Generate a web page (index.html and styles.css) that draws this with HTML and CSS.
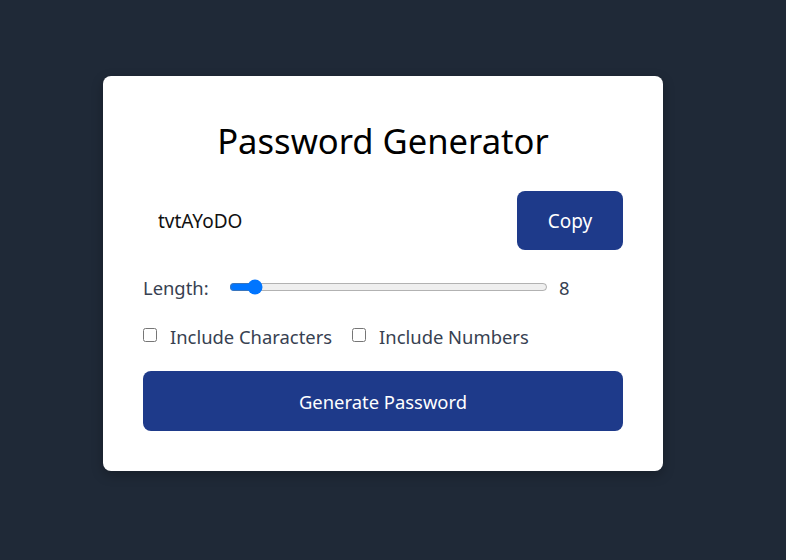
FILE: index.html
```html
<!DOCTYPE html>
<html>
<head>
<meta charset="utf-8">
<link rel="stylesheet" href="styles.css">
</head>
<body>
<div class="page">
  <div class="card">
    <h1 class="title">Password Generator</h1>
    <div class="output-row">
      <input class="password" type="text" value="tvtAYoDO" readonly>
      <button class="copy-btn">Copy</button>
    </div>
    <div class="length-row">
      <label class="label">Length:</label>
      <input class="slider" type="range" min="6" max="40" value="8">
      <span class="value">8</span>
    </div>
    <div class="options-row">
      <label class="option"><input type="checkbox" class="check"><span>Include Characters</span></label>
      <label class="option"><input type="checkbox" class="check"><span>Include Numbers</span></label>
    </div>
    <button class="generate-btn">Generate Password</button>
  </div>
</div>
</body>
</html>
```

FILE: styles.css
```css
html, body {
  margin: 0;
  height: 100%;
}
body {
  background: #1f2937;
  font-family: "Noto Sans", "Open Sans", sans-serif;
}
.page {
  padding: 76px 0 0 103px;
}
.card {
  width: 480px;
  background: #ffffff;
  border-radius: 8px;
  padding: 40px;
  box-shadow: 0 4px 12px rgba(0, 0, 0, 0.25);
}
.title {
  margin: 0;
  text-align: center;
  font-weight: 400;
  font-size: 34.6px;
  line-height: 50px;
  color: #000;
}
.output-row {
  display: flex;
  align-items: center;
  margin-top: 25px;
}
.password {
  flex: 1;
  min-width: 0;
  border: none;
  outline: none;
  padding: 0 15px;
  font-family: inherit;
  font-size: 19px;
  color: #111;
  background: transparent;
}
.copy-btn {
  width: 106px;
  height: 59px;
  padding-top: 2px;
  border: none;
  border-radius: 8px;
  background: #1e3a8a;
  color: #fff;
  font-family: inherit;
  font-size: 19px;
}
.length-row {
  display: flex;
  align-items: center;
  height: 24px;
  margin-top: 25px;
  color: #374151;
  font-size: 18.4px;
}
.label {
  width: 86px;
  flex: none;
}
.slider {
  width: 319px;
  margin: 0;
}
.value {
  margin-left: 11px;
}
.options-row {
  display: flex;
  align-items: center;
  gap: 20px;
  height: 24px;
  margin-top: 25px;
  color: #374151;
  font-size: 18.4px;
}
.option {
  display: flex;
  align-items: center;
}
.check {
  margin: -3px 13px 0 0;
  width: 14px;
  height: 14px;
}
.generate-btn {
  display: block;
  width: 100%;
  height: 60px;
  margin-top: 23px;
  border: none;
  border-radius: 8px;
  background: #1e3a8a;
  color: #fff;
  font-family: inherit;
  font-size: 18.4px;
}
```
